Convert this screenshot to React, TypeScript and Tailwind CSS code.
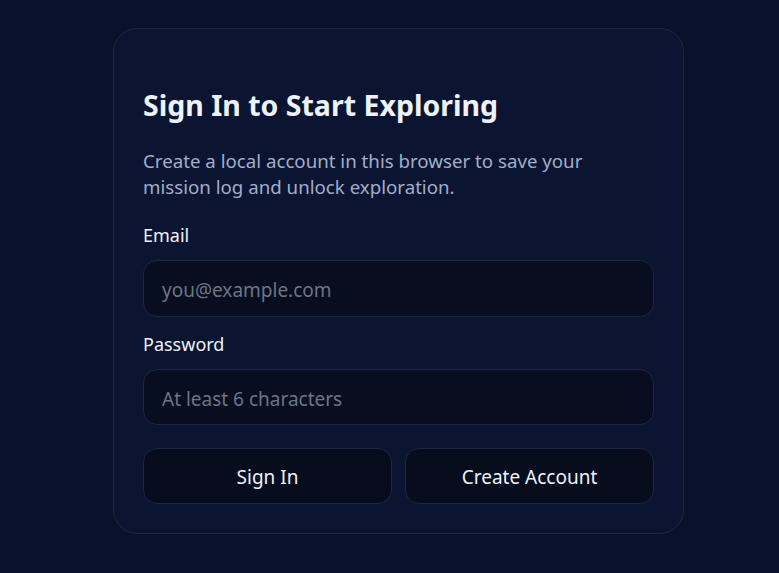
export default function App() {
  return (
    <div
      className="min-h-screen w-full bg-[#0a1229] pt-[28px] flex justify-center"
      style={{ fontFamily: '"Segoe UI", "Noto Sans", sans-serif' }}
    >
      <div className="w-[571px] h-[506px] ml-[18px] rounded-[24px] border border-[#1b2841] bg-[#0b1430] px-[29px] pt-[56px]">
        <h1 className="text-[28.5px] leading-[40px] font-bold text-[#eef3fb]">
          Sign In to Start Exploring
        </h1>
        <p className="mt-[23px] max-w-[470px] text-[18.7px] leading-[26px] text-[#a0b0cb]">
          Create a local account in this browser to save your mission log and
          unlock exploration.
        </p>
        <label className="block mt-[22px] text-[18px] leading-[26px] text-[#eef3fb]">
          Email
        </label>
        <input
          className="mt-[12px] w-full h-[57px] rounded-[14px] border border-[#1b2841] bg-[#080e1f] px-[18px] pt-[2px] text-[19px] text-[#eef3fb] placeholder:text-[#6d7585] outline-none"
          placeholder="you@example.com"
        />
        <label className="block mt-[14px] text-[18px] leading-[26px] text-[#eef3fb]">
          Password
        </label>
        <input
          type="password"
          className="mt-[12px] w-full h-[56px] rounded-[14px] border border-[#1b2841] bg-[#080e1f] px-[18px] pt-[3px] text-[19px] text-[#eef3fb] placeholder:text-[#6d7585] outline-none"
          placeholder="At least 6 characters"
        />
        <div className="mt-[23px] grid grid-cols-2 gap-[13px]">
          <button className="h-[56px] rounded-[14px] border border-[#1b2841] bg-[#070d1d] pt-[2px] text-[19px] text-[#eef3fb]">
            Sign In
          </button>
          <button className="h-[56px] rounded-[14px] border border-[#1b2841] bg-[#070d1d] pt-[2px] text-[19px] text-[#eef3fb]">
            Create Account
          </button>
        </div>
      </div>
    </div>
  );
}
